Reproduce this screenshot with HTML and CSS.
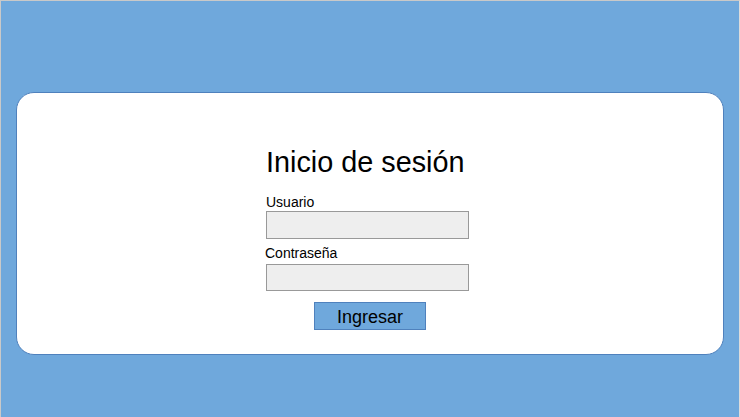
FILE: index.html
```html
<!DOCTYPE html>
<html lang="es">
<head>
<meta charset="utf-8">
<title>Inicio de sesión</title>
<link rel="stylesheet" href="styles.css">
</head>
<body>
<div class="frame">
  <div class="card">
    <form class="login">
      <h1 class="title">Inicio de sesión</h1>
      <label class="label label-user" for="user">Usuario</label>
      <input class="field field-user" id="user" type="text">
      <label class="label label-pass" for="pass">Contraseña</label>
      <input class="field field-pass" id="pass" type="password">
      <button class="submit" type="button">Ingresar</button>
    </form>
  </div>
</div>
</body>
</html>
```
FILE: styles.css
```css
* { box-sizing: border-box; }
html, body { margin: 0; padding: 0; }
body {
  font-family: "Liberation Sans", Arial, sans-serif;
  background: #ffffff;
}
.frame {
  width: 740px;
  height: 417px;
  background: #6fa8dc;
  border-top: 1px solid #c9c9c9;
  border-left: 1px solid #c9c9c9;
  border-right: 1px solid #dcdcdc;
  padding: 91px 0 0 15px;
}
.card {
  width: 708px;
  height: 263px;
  background: #ffffff;
  border: 1px solid #4f81bd;
  border-radius: 18px;
  padding: 53px 0 0 249px;
}
.login {
  width: 203px;
  display: flex;
  flex-direction: column;
  align-items: flex-start;
}
.title {
  margin: 0 0 15px 0;
  font-size: 28.8px;
  line-height: 33px;
  font-weight: normal;
  color: #000;
  white-space: nowrap;
}
.label {
  font-size: 14px;
  line-height: 16px;
  color: #000;
}
.label-user { margin-bottom: 1px; }
.label-pass { margin: 6px 0 3px -1px; }
.field {
  width: 203px;
  margin: 0;
  padding: 0 4px;
  background: #eeeeee;
  border: 1px solid #999999;
  border-radius: 0;
  outline: none;
  font: inherit;
}
.field-user { height: 28px; }
.field-pass { height: 27px; }
.submit {
  margin: 11px 0 0 48px;
  width: 112px;
  height: 28px;
  padding: 2px 0 0;
  background: #6fa8dc;
  border: 1px solid #4f81bd;
  border-radius: 0;
  font-family: "Liberation Sans", Arial, sans-serif;
  font-size: 18px;
  line-height: 24px;
  color: #000;
}
```
